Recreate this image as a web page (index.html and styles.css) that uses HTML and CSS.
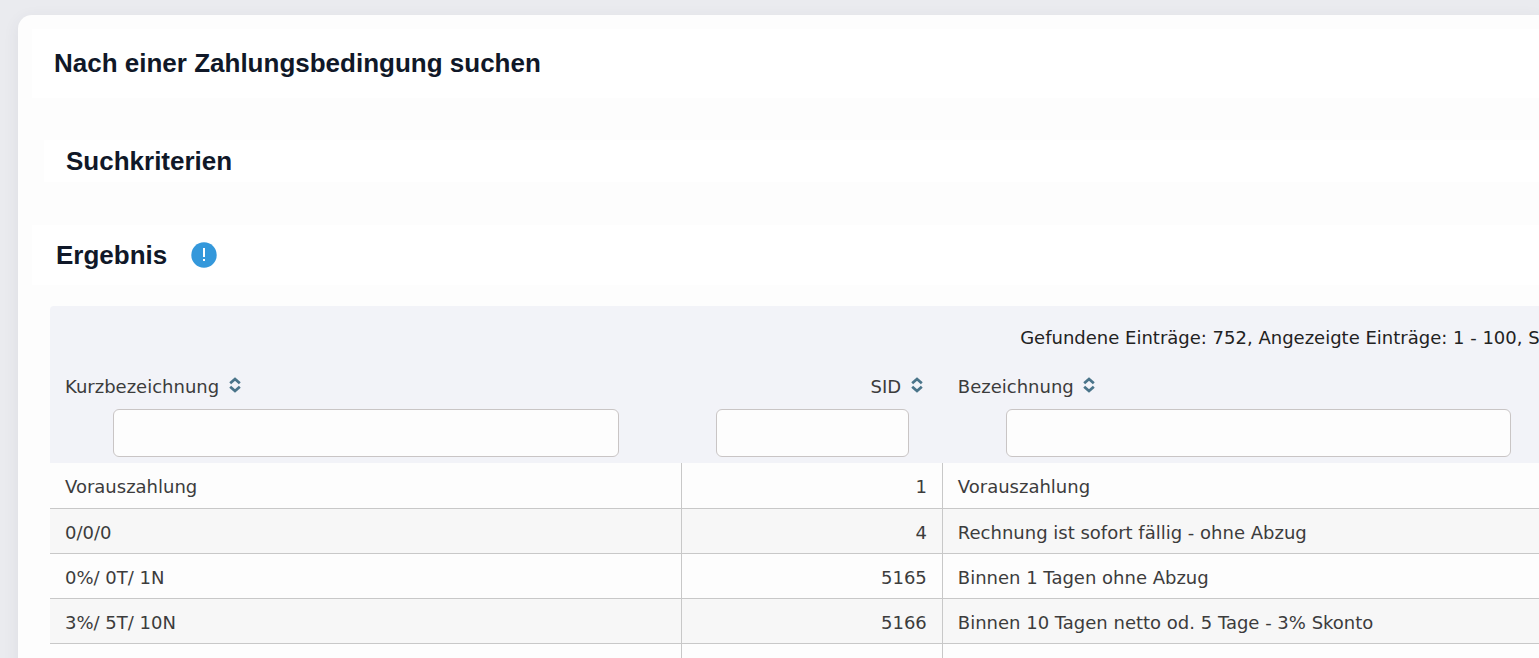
FILE: index.html
```
<!DOCTYPE html>
<html lang="de">
<head>
	<meta charset="utf-8">
	<title>Zahlungsbedingung suchen</title>
	<link rel="stylesheet" href="styles.css">
</head>
<body>
	<!-- Sort icon, used in every column head -->
	<svg class="sprite" width="0" height="0">
		<symbol id="sort" viewBox="0 0 12 16">
			<path d="M1.2 6.2 L6 2 L10.8 6.2 M1.2 9.8 L6 14 L10.8 9.8" fill="none" stroke="#4a748a" stroke-width="2.8"/>
		</symbol>
	</svg>

	<main class="panel">
		<header class="page-head">
			<h1>Nach einer Zahlungsbedingung suchen</h1>
		</header>

		<section class="criteria">
			<h2>Suchkriterien</h2>
		</section>

		<section class="result">
			<div class="result-head">
				<h2>Ergebnis</h2>
				<button type="button" class="info" aria-label="Hinweis">
					<svg width="26" height="26" viewBox="0 0 26 26">
						<circle cx="13" cy="13" r="12.7" fill="#3498db"/>
						<rect x="12" y="6" width="2" height="9" fill="#fff"/>
						<rect x="12" y="17" width="2" height="2" fill="#fff"/>
					</svg>
				</button>
			</div>

			<table class="list">
				<colgroup>
					<col class="col-wide">
					<col class="col-sid">
					<col>
				</colgroup>
				<thead>
					<tr class="summary">
						<td colspan="3">Gefundene Einträge: 752, Angezeigte Einträge: 1 - 100, S</td>
					</tr>
					<tr class="titles">
						<th scope="col">
							<label for="kurz">Kurzbezeichnung</label>
							<button type="button" class="sort" aria-label="Sortieren"><svg width="12" height="16"><use href="#sort"/></svg></button>
						</th>
						<th scope="col" class="num">
							<label for="sid">SID</label>
							<button type="button" class="sort" aria-label="Sortieren"><svg width="12" height="16"><use href="#sort"/></svg></button>
						</th>
						<th scope="col">
							<label for="bez">Bezeichnung</label>
							<button type="button" class="sort" aria-label="Sortieren"><svg width="12" height="16"><use href="#sort"/></svg></button>
						</th>
					</tr>
					<tr class="filters">
						<td><input type="text" id="kurz"></td>
						<td><input type="text" id="sid"></td>
						<td><input type="text" id="bez"></td>
					</tr>
				</thead>
				<tbody>
					<tr>
						<td>Vorauszahlung</td>
						<td class="num">1</td>
						<td>Vorauszahlung</td>
					</tr>
					<tr>
						<td>0/0/0</td>
						<td class="num">4</td>
						<td>Rechnung ist sofort fällig - ohne Abzug</td>
					</tr>
					<tr>
						<td>0%/ 0T/ 1N</td>
						<td class="num">5165</td>
						<td>Binnen 1 Tagen ohne Abzug</td>
					</tr>
					<tr>
						<td>3%/ 5T/ 10N</td>
						<td class="num">5166</td>
						<td>Binnen 10 Tagen netto od. 5 Tage - 3% Skonto</td>
					</tr>
					<tr>
						<td></td>
						<td class="num"></td>
						<td></td>
					</tr>
				</tbody>
			</table>
		</section>
	</main>
</body>
</html>
```

FILE: styles.css
```
* {
	box-sizing: border-box;
}

body {
	margin: 0;
	padding: 15px 0 0 18px;
	height: 100vh;
	overflow: hidden;
	background-color: #eaebef;
	color: #3c3c3c;
	font-family: Verdana, "DejaVu Sans", sans-serif;
	font-size: 18px;
	line-height: 24px;
}

.sprite {
	position: absolute;
}

/* White panel, runs off the right edge of the window */
.panel {
	min-height: 100%;
	padding: 14px 0 0 14px;
	border-radius: 14px 0 0 0;
	background-color: #fdfdfd;
	box-shadow: 0 4px 16px rgba(60, 60, 90, 0.08);
}

h1, h2 {
	margin: 0;
	color: #101828;
	font-family: "Liberation Sans", Arial, sans-serif;
	font-size: 26px;
	line-height: 30px;
}

.page-head {
	padding: 19px 22px 20px;
	background-color: #fff;
}

.criteria {
	margin: 42px 0 43px 12px;
	padding: 6px 22px;
	background-color: #fff;
}

.result-head {
	display: flex;
	align-items: center;
	gap: 24px;
	padding: 15px 24px;
	background-color: #fff;
}

button {
	padding: 0;
	border: 0;
	background: none;
	cursor: pointer;
}

.info svg, .sort svg {
	display: block;
}

/* Result list */
.list {
	width: 99vw;
	margin: 21px 0 0 18px;
	border-spacing: 0;
	table-layout: fixed;
}

.col-wide {
	width: 41.5%;
}

.col-sid {
	width: 17.1%;
}

.list th, .list td {
	padding: 0 15px;
	text-align: left;
	font-weight: normal;
	white-space: nowrap;
}

.list .num {
	text-align: right;
}

thead td, thead th {
	background-color: #f2f3f8;
}

.list .summary td {
	height: 64px;
	padding-right: 34px;
	border-radius: 4px 0 0 0;
	color: #222;
	text-align: right;
}

.titles th {
	height: 33px;
}

.titles .num {
	padding-right: 20px;
}

.sort {
	margin-left: 4px;
}

.list .filters td {
	height: 60px;
	text-align: center;
}

.filters input {
	display: block;
	width: 84%;
	height: 48px;
	margin: 0 auto;
	padding: 0 12px;
	border: 1px solid #c9c5c5;
	border-radius: 6px;
	background-color: #fdfdfd;
	font: inherit;
}

.list tbody td {
	height: 45px;
	padding-top: 3px;
	border-right: 1px solid #c8c8c8;
	border-bottom: 1px solid #c8c8c8;
}

.list tbody tr:first-child td {
	height: 46px;
}

tbody tr:nth-child(even) {
	background-color: #f7f7f7;
}
```
